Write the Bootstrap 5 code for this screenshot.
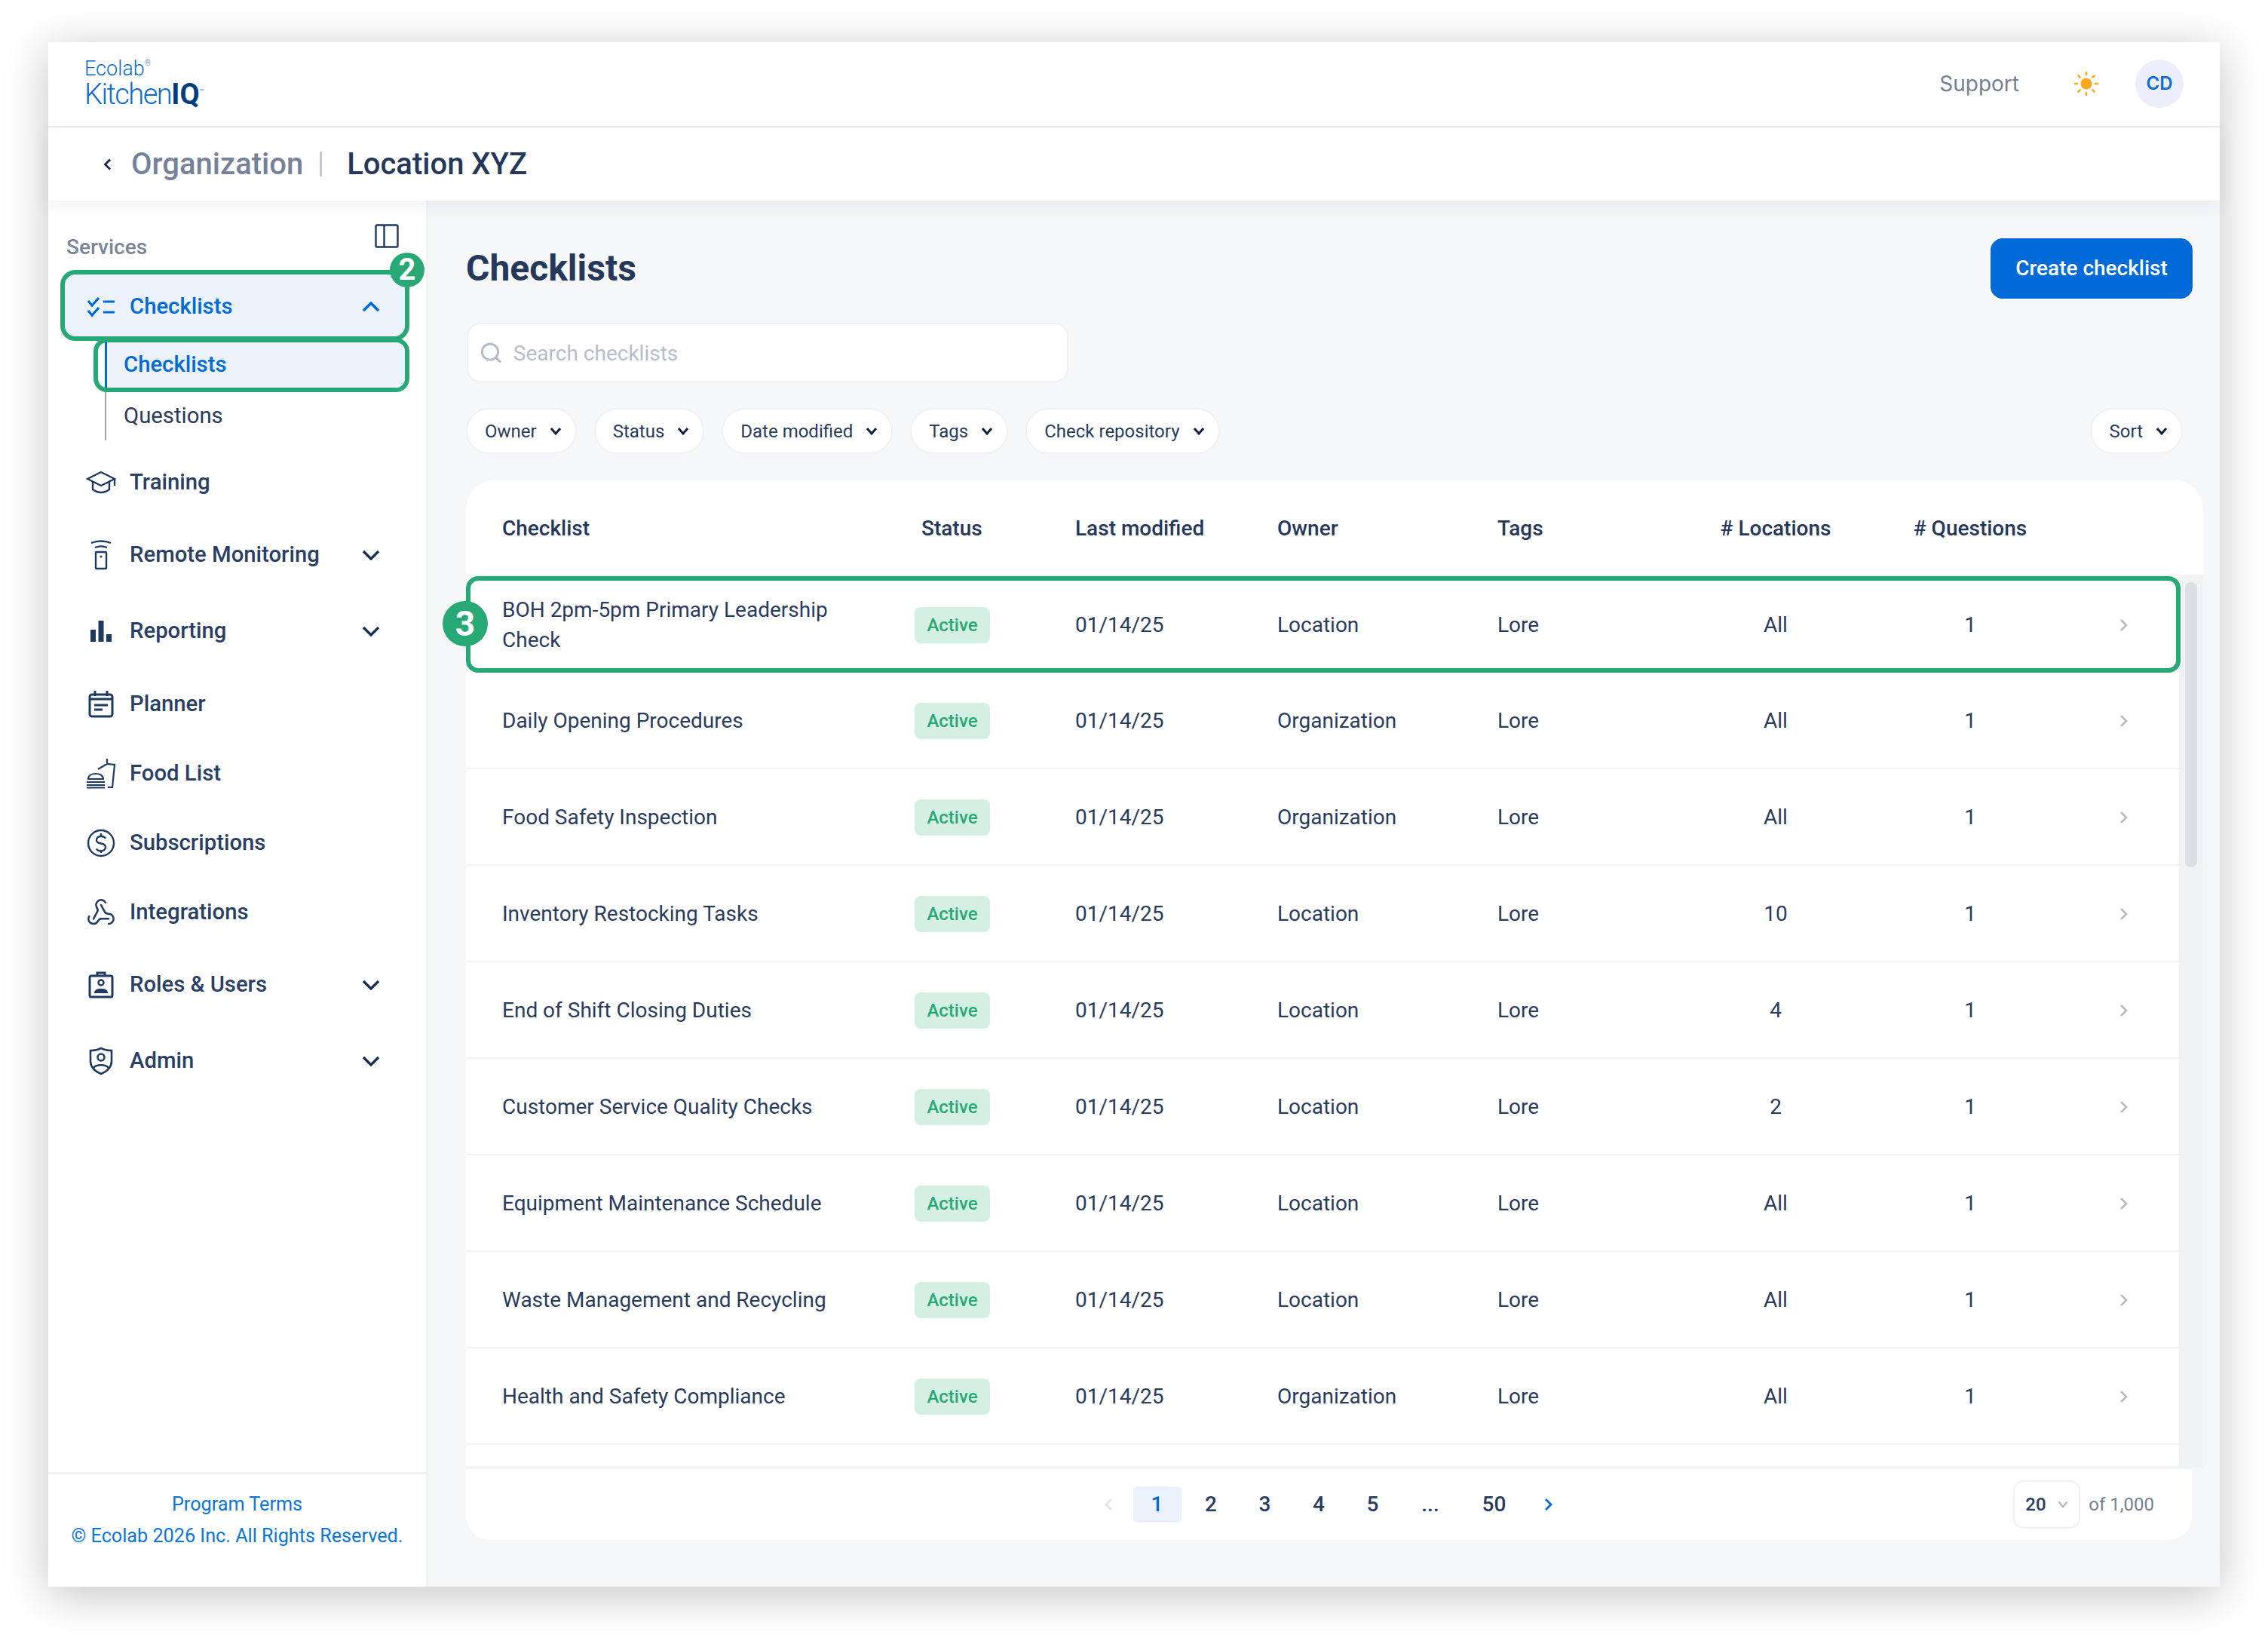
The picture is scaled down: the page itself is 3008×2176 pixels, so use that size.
<!DOCTYPE html>
<html lang="en">
<head>
<meta charset="UTF-8">
<title>Checklists</title>
<link href="https://cdn.jsdelivr.net/npm/bootstrap@5.3.0/dist/css/bootstrap.min.css" rel="stylesheet">
<style>
  body { background: #fff; font-family: Roboto, "Liberation Sans", sans-serif; color: #2a3b5c; overflow: hidden; height: 2176px; }
  .app-frame { width: 2880px; height: 2048px; margin: 56px auto 0; background: #fff; box-shadow: 0 10px 56px rgba(0,0,0,.24); display: flex; flex-direction: column; }

  /* top bars */
  .top-bar { height: 113px; border-bottom: 2px solid #e9eaef; padding: 0 48px 2px 48px; flex: none; }
  .logo-text { color: #0a6bd0; font-weight: 300; line-height: 1; margin-bottom: 4px; }
  .logo-a { font-size: 27px; height: 28px; }
  .logo-b { font-size: 38px; letter-spacing: -1.5px; height: 34px; white-space: nowrap; }
  .logo-b b { color: #003d7c; font-weight: 700; letter-spacing: 0; }
  .logo-text sup { font-size: 10px; top: -1.3em; letter-spacing: 0; }
  .support-link { font: 400 28px Inter, sans-serif; color: #75808f; }
  .sun-ico { margin: 0 49px 0 73px; }
  .avatar { width: 64px; height: 64px; border-radius: 50%; background: #eceffb; color: #0a6bd0; font: 600 24px Inter, sans-serif; }
  .crumb-bar { height: 97px; padding-left: 73px; font-size: 40px; font-weight: 500; box-shadow: 0 6px 24px rgba(30,40,70,.07); position: relative; z-index: 2; flex: none; }
  .crumb-back { margin-right: 26px; }
  .crumb-org { color: #76819a; }
  .crumb-sep { width: 3px; height: 33px; background: #c3c9d3; margin: 0 33px 0 22px; }
  .crumb-loc { color: #26385a; }

  /* sidebar */
  .app-body { flex: 1; min-height: 0; }
  .side-nav { width: 503px; border-right: 2px solid #f1f2f4; flex: none; }
  .side-head { padding: 31px 36px 0 24px; height: 82px; }
  .side-title { font-size: 28px; font-weight: 500; color: #7a8599; line-height: 40px; margin-top: 11px; }
  .side-item { height: 92px; padding: 3px 61px 0 50px; font-size: 29.3px; font-weight: 500; color: #2a3f63; text-decoration: none; }
  .side-item.tall { height: 101px; }
  .side-item svg.nav-ico { margin-right: 18px; flex: none; }
  .side-item .chev { margin-left: auto; }
  .side-active { height: 94px; margin: 10px 22px 0 16px; padding: 3px 33px 0 28px; border: 6px solid #27a874; border-radius: 20px; background: #ebf2fb; color: #006bd6; }
  .sub-wrap { margin: -4px 22px 0 60px; }
  .sub-active { height: 72px; border: 6px solid #27a874; border-radius: 18px; padding-left: 9px; background: #fff; }
  .sub-inner { height: 100%; flex: 1; border-left: 3px solid #006bd6; background: #ebf2fb; padding-left: 22px; font-size: 29.3px; font-weight: 500; color: #006bd6; border-radius: 0 12px 12px 0; }
  .sub-plain { height: 64px; margin-left: 15px; border-left: 2px solid #9aa5b5; padding-left: 23px; font-size: 29.3px; color: #2a3b5c; margin-bottom: 8px; }
  .step-dot { position: absolute; border-radius: 50%; background: #27a874; color: #fff; font-weight: 700; z-index: 5; }
  .step-two { width: 46px; height: 46px; top: -29px; right: -26px; font-size: 40px; }
  .step-three { width: 60px; height: 60px; top: 161px; left: -31px; font-size: 46px; }
  .side-foot { margin-top: auto; border-top: 3px solid #f1f2f4; height: 152px; padding-top: 19px; text-align: center; color: #0a75db; font-size: 25.2px; line-height: 42px; }

  /* main */
  .main-pane { flex: 1; min-width: 0; background: #f6f7f9; padding: 50px 22px 0 51px; }
  .page-title { font-size: 48px; font-weight: 700; color: #26385a; margin: 0; }
  .btn-create { width: 268px; height: 80px; margin-right: 14px; background: #006bd6; border: 0; border-radius: 16px; font-size: 28px; font-weight: 500; color: #fff; padding: 0; }
  .search-box { width: 798px; height: 79px; margin: 32px 0 0 1px; background: #fff; border: 2px solid #f0f1f4; border-radius: 18px; padding-left: 16px; }
  .search-box input { border: 0; box-shadow: none; padding: 2px 0 0 15px; font-size: 28px; background: transparent; }
  .search-box input::placeholder { color: #b7bdca; }
  .filter-row { margin: 34px 27px 0 0; }
  .filter-set { gap: 23px; }
  .filter-pill { height: 61px; padding: 0 18px 0 23px; background: #fff; border: 2px solid #f0f1f4; border-radius: 31px; font-size: 24px; color: #2a3b5c; gap: 17px; }
  .table-shell { margin-top: 34px; position: relative; }
  .tbl-grid { display: grid; grid-template-columns: 595px 213px 268px 292px 235px 268px 248px 154px; align-items: center; }
  .tbl-head { height: 126px; padding-top: 4px; background: #fff; border-radius: 40px 40px 0 0; font-size: 28px; font-weight: 500; color: #26385a; }
  .tbl-body { height: 1184px; overflow: hidden; border-top: 2px solid #f1f2f4; }
  .tbl-rows { width: 2272px; flex: none; border-radius: 0; }
  .tbl-rows .list-group-item { padding: 0; height: 128px; border: 0; border-bottom: 2px solid #f2f3f5; border-radius: 0; font-size: 28px; line-height: 40px; color: #2a3b5c; background: #fff; }
  .tbl-rows .list-group-item.row-mark { border: 6px solid #27a874; border-radius: 16px; width: 2274px; z-index: 3; }
  .tbl-rows .tbl-grid { height: 126px; padding-top: 2px; }
  .tbl-rows .row-mark .tbl-grid { margin: -6px 0 0 -6px; height: 128px; }
  .cell-first { padding-left: 48px; padding-right: 100px; }
  .cell-status-h { padding-left: 9px; }
  .cell-center { text-align: center; }
  .cell-go { padding-left: 74px; line-height: 0; }
  .state-tag { display: inline-block; width: 100px; height: 48px; line-height: 48px; text-align: center; background: #d4f0e4; color: #27a974; font-size: 24px; font-weight: 500; border-radius: 8px; }
  .scroll-track { width: 32px; flex: none; background: #f1f2f4; padding: 8px; }
  .scroll-thumb { height: 378px; background: #dcdfe4; border-radius: 8px; }
  .tbl-foot { height: 96px; margin-right: 15px; background: #fff; border-top: 2px solid #f2f3f5; border-radius: 0 0 32px 32px; padding: 0 50px 0 827px; }
  .pager { gap: 8.5px; margin: 0; }
  .pager .page-link { width: 64px; height: 48px; padding: 0; margin: 0; border: 0; background: transparent; color: #2a3b5c; font-size: 28px; font-weight: 500; display: flex; align-items: center; justify-content: center; border-radius: 6px !important; }
  .pager .page-item.active .page-link { background: #ebf2fb; color: #006bd6; }
  .pager .pg-arrow { width: 50px; }
  .pager .pg-dots { width: 74px; }
  .pager .pg-last { width: 80px; }
  .size-pick { width: 89px; height: 64px; border: 2px solid #f0f1f4; border-radius: 14px; font-size: 24px; font-weight: 500; padding: 0 14px; margin-right: 11px; }
  .foot-total { font-size: 24px; color: #75808f; }
</style>
</head>
<body>
<div class="app-frame">
  <header class="top-bar d-flex align-items-center justify-content-between">
    <div class="logo-text">
      <div class="logo-a">Ecolab<sup>®</sup></div>
      <div class="logo-b">Kitchen<b>IQ</b><sup>™</sup></div>
    </div>
    <div class="d-flex align-items-center">
      <span class="support-link">Support</span>
      <svg class="sun-ico" width="32" height="32" viewBox="0 0 32 32" fill="none" stroke="#fca81f" stroke-width="2.6" stroke-linecap="round"><circle cx="16" cy="16" r="7.5" fill="#fca81f" stroke="none"/><path d="M16 1v3M16 28v3M1 16h3M28 16h3M5.4 5.4l2.1 2.1M24.5 24.5l2.1 2.1M5.4 26.6l2.1-2.1M24.5 7.5l2.1-2.1"/></svg>
      <div class="avatar d-flex align-items-center justify-content-center">CD</div>
    </div>
  </header>
  <div class="crumb-bar d-flex align-items-center">
    <svg class="crumb-back" width="11" height="16" viewBox="0 0 11 16" fill="none" stroke="#1a2b4a" stroke-width="2.8"><path d="M9 1.5 2.5 8 9 14.5"/></svg>
    <span class="crumb-org">Organization</span>
    <span class="crumb-sep"></span>
    <span class="crumb-loc">Location XYZ</span>
  </div>

  <div class="app-body d-flex">
    <aside class="side-nav d-flex flex-column">
      <div class="side-head d-flex justify-content-between align-items-start">
        <span class="side-title">Services</span>
        <svg width="32" height="32" viewBox="0 0 32 32" fill="none" stroke="#1f3a60" stroke-width="2.4"><rect x="1.5" y="1.5" width="29" height="29" rx="1.5"/><path d="M12.5 1.5v29"/></svg>
      </div>

      <div class="side-item side-active position-relative d-flex align-items-center">
        <svg class="nav-ico" width="40" height="40" viewBox="0 0 40 40" fill="none" stroke="#006bd6" stroke-width="3.2"><path d="M3 12l5 6 9-10M3 25l5 6 9-10M23 13h15M23 27h15"/></svg>
        Checklists
        <svg class="chev" width="24" height="14" viewBox="0 0 24 14" fill="none" stroke="#006bd6" stroke-width="3.6"><path d="M2 12 12 2l10 10"/></svg>
        <span class="step-dot step-two d-flex align-items-center justify-content-center">2</span>
      </div>
      <div class="sub-wrap">
        <div class="sub-active d-flex"><div class="sub-inner d-flex align-items-center">Checklists</div></div>
        <div class="sub-plain d-flex align-items-center">Questions</div>
      </div>

      <a class="side-item d-flex align-items-center">
        <svg class="nav-ico" width="40" height="40" viewBox="0 0 40 40" fill="none" stroke="#1f3a60" stroke-width="2.4"><path d="M2 15 20 6l18 9-18 9zM9 19v10c4 3 7 4 11 4s7-1 11-4V19M38 15v9"/></svg>
        Training
      </a>
      <a class="side-item tall d-flex align-items-center">
        <svg class="nav-ico" width="40" height="40" viewBox="0 0 40 40" fill="none" stroke="#1f3a60" stroke-width="2.4"><path d="M7 4c8-3 18-3 26 0M12 10c5-2 11-2 16 0"/><rect x="13" y="16" width="14" height="22" rx="1"/><circle cx="20" cy="22" r="1.6" fill="#1f3a60" stroke="none"/></svg>
        Remote Monitoring
        <svg class="chev" width="24" height="14" viewBox="0 0 24 14" fill="none" stroke="#1a2f52" stroke-width="3.4"><path d="M2 2l10 10L22 2"/></svg>
      </a>
      <a class="side-item tall d-flex align-items-center">
        <svg class="nav-ico" width="40" height="40" viewBox="0 0 40 40" fill="#1f3a60"><rect x="6" y="18" width="7" height="16"/><rect x="16.5" y="6" width="7" height="28"/><rect x="27" y="24" width="7" height="10"/></svg>
        Reporting
        <svg class="chev" width="24" height="14" viewBox="0 0 24 14" fill="none" stroke="#1a2f52" stroke-width="3.4"><path d="M2 2l10 10L22 2"/></svg>
      </a>
      <a class="side-item d-flex align-items-center">
        <svg class="nav-ico" width="40" height="40" viewBox="0 0 40 40" fill="none" stroke="#1f3a60" stroke-width="3"><rect x="5" y="7" width="30" height="29" rx="3"/><path d="M12 2v7M28 2v7M5 13h30M11 21h18M11 27h11"/></svg>
        Planner
      </a>
      <a class="side-item d-flex align-items-center">
        <svg class="nav-ico" width="40" height="40" viewBox="0 0 40 40" fill="none" stroke="#1f3a60" stroke-width="2.2"><path d="M3 27c0-5 5-7 10-7s10 2 10 7zM1 31h24M1 35h24M1 38.5h24M16 14l12-7 10 1-3 30h-6M28 0v8"/></svg>
        Food List
      </a>
      <a class="side-item d-flex align-items-center">
        <svg class="nav-ico" width="40" height="40" viewBox="0 0 40 40" fill="none" stroke="#1f3a60" stroke-width="2.4"><circle cx="20" cy="20" r="17"/><path d="M26 14c-1-2-3-3-6-3-4 0-6 2-6 5s3 4 6 4.5 6 2 6 5-3 5-6 5c-3 0-5-1-6-3M20 7v4M20 29v4"/></svg>
        Subscriptions
      </a>
      <a class="side-item d-flex align-items-center">
        <svg class="nav-ico" width="40" height="40" viewBox="0 0 24 24" fill="none" stroke="#1f3a60" stroke-width="1.5" stroke-linecap="round"><path d="M18 16.98h-5.99c-1.1 0-1.95.94-2.48 1.9A4 4 0 0 1 2 17c.01-.7.2-1.4.57-2"/><path d="m6 17 3.13-5.78c.53-.97.1-2.18-.5-3.1a4 4 0 1 1 6.89-4.06"/><path d="m12 6 3.13 5.73C15.66 12.7 16.9 13 18 13a4 4 0 0 1 0 8"/></svg>
        Integrations
      </a>
      <a class="side-item tall d-flex align-items-center">
        <svg class="nav-ico" width="40" height="40" viewBox="0 0 40 40" fill="none" stroke="#1f3a60" stroke-width="3"><rect x="5" y="8" width="30" height="28" rx="2"/><path d="M15 8V4h10v4"/><circle cx="20" cy="17" r="3.5" stroke-width="2.5"/><path d="M11 31c0-5 4-6 9-6s9 1 9 6z" fill="#1f3a60" stroke="none"/></svg>
        Roles &amp; Users
        <svg class="chev" width="24" height="14" viewBox="0 0 24 14" fill="none" stroke="#1a2f52" stroke-width="3.4"><path d="M2 2l10 10L22 2"/></svg>
      </a>
      <a class="side-item tall d-flex align-items-center">
        <svg class="nav-ico" width="40" height="40" viewBox="0 0 40 40" fill="none" stroke="#1f3a60" stroke-width="2.6"><path d="M20 3c4 2 9 3 14 3v14c0 9-7 14-14 17C13 34 6 29 6 20V6c5 0 10-1 14-3z"/><circle cx="20" cy="15" r="4.5"/><path d="M10 29c4-5 16-5 20 0"/></svg>
        Admin
        <svg class="chev" width="24" height="14" viewBox="0 0 24 14" fill="none" stroke="#1a2f52" stroke-width="3.4"><path d="M2 2l10 10L22 2"/></svg>
      </a>

      <div class="side-foot">
        <div>Program Terms</div>
        <div>© Ecolab 2026 Inc. All Rights Reserved.</div>
      </div>
    </aside>

    <main class="main-pane">
      <div class="d-flex align-items-center justify-content-between">
        <h1 class="page-title">Checklists</h1>
        <button class="btn btn-primary btn-create">Create checklist</button>
      </div>
      <div class="search-box d-flex align-items-center">
        <svg width="30" height="30" viewBox="0 0 30 30" fill="none" stroke="#b4bac7" stroke-width="3"><circle cx="13.5" cy="13.5" r="11"/><path d="M21.5 21.5 28 28"/></svg>
        <input class="form-control" type="text" placeholder="Search checklists">
      </div>
      <div class="filter-row d-flex align-items-center">
        <div class="filter-set d-flex">
          <div class="filter-pill d-flex align-items-center">Owner <svg width="16" height="11" viewBox="0 0 16 11" fill="none" stroke="#14233f" stroke-width="3"><path d="M2 2l6 7 6-7"/></svg></div>
          <div class="filter-pill d-flex align-items-center">Status <svg width="16" height="11" viewBox="0 0 16 11" fill="none" stroke="#14233f" stroke-width="3"><path d="M2 2l6 7 6-7"/></svg></div>
          <div class="filter-pill d-flex align-items-center">Date modified <svg width="16" height="11" viewBox="0 0 16 11" fill="none" stroke="#14233f" stroke-width="3"><path d="M2 2l6 7 6-7"/></svg></div>
          <div class="filter-pill d-flex align-items-center">Tags <svg width="16" height="11" viewBox="0 0 16 11" fill="none" stroke="#14233f" stroke-width="3"><path d="M2 2l6 7 6-7"/></svg></div>
          <div class="filter-pill d-flex align-items-center">Check repository <svg width="16" height="11" viewBox="0 0 16 11" fill="none" stroke="#14233f" stroke-width="3"><path d="M2 2l6 7 6-7"/></svg></div>
        </div>
        <div class="filter-pill d-flex align-items-center ms-auto">Sort <svg width="16" height="11" viewBox="0 0 16 11" fill="none" stroke="#14233f" stroke-width="3"><path d="M2 2l6 7 6-7"/></svg></div>
      </div>

      <div class="table-shell">
        <span class="step-dot step-three d-flex align-items-center justify-content-center">3</span>
        <div class="tbl-head tbl-grid">
          <div class="cell-first">Checklist</div>
          <div class="cell-status-h">Status</div>
          <div>Last modified</div>
          <div>Owner</div>
          <div>Tags</div>
          <div class="cell-center"># Locations</div>
          <div class="cell-center"># Questions</div>
          <div></div>
        </div>
        <div class="tbl-body d-flex">
          <div class="tbl-rows list-group">
            <div class="list-group-item row-mark">
              <div class="tbl-grid">
                <div class="cell-first">BOH 2pm-5pm Primary Leadership Check</div><div><span class="state-tag">Active</span></div><div>01/14/25</div><div>Location</div><div>Lore</div><div class="cell-center">All</div><div class="cell-center">1</div>
                <div class="cell-go"><svg width="12" height="18" viewBox="0 0 12 18" fill="none" stroke="#b4bac7" stroke-width="2.6"><path d="M2 2l7 7-7 7"/></svg></div>
              </div>
            </div>
            <div class="list-group-item"><div class="tbl-grid">
              <div class="cell-first">Daily Opening Procedures</div><div><span class="state-tag">Active</span></div><div>01/14/25</div><div>Organization</div><div>Lore</div><div class="cell-center">All</div><div class="cell-center">1</div>
              <div class="cell-go"><svg width="12" height="18" viewBox="0 0 12 18" fill="none" stroke="#b4bac7" stroke-width="2.6"><path d="M2 2l7 7-7 7"/></svg></div>
            </div></div>
            <div class="list-group-item"><div class="tbl-grid">
              <div class="cell-first">Food Safety Inspection</div><div><span class="state-tag">Active</span></div><div>01/14/25</div><div>Organization</div><div>Lore</div><div class="cell-center">All</div><div class="cell-center">1</div>
              <div class="cell-go"><svg width="12" height="18" viewBox="0 0 12 18" fill="none" stroke="#b4bac7" stroke-width="2.6"><path d="M2 2l7 7-7 7"/></svg></div>
            </div></div>
            <div class="list-group-item"><div class="tbl-grid">
              <div class="cell-first">Inventory Restocking Tasks</div><div><span class="state-tag">Active</span></div><div>01/14/25</div><div>Location</div><div>Lore</div><div class="cell-center">10</div><div class="cell-center">1</div>
              <div class="cell-go"><svg width="12" height="18" viewBox="0 0 12 18" fill="none" stroke="#b4bac7" stroke-width="2.6"><path d="M2 2l7 7-7 7"/></svg></div>
            </div></div>
            <div class="list-group-item"><div class="tbl-grid">
              <div class="cell-first">End of Shift Closing Duties</div><div><span class="state-tag">Active</span></div><div>01/14/25</div><div>Location</div><div>Lore</div><div class="cell-center">4</div><div class="cell-center">1</div>
              <div class="cell-go"><svg width="12" height="18" viewBox="0 0 12 18" fill="none" stroke="#b4bac7" stroke-width="2.6"><path d="M2 2l7 7-7 7"/></svg></div>
            </div></div>
            <div class="list-group-item"><div class="tbl-grid">
              <div class="cell-first">Customer Service Quality Checks</div><div><span class="state-tag">Active</span></div><div>01/14/25</div><div>Location</div><div>Lore</div><div class="cell-center">2</div><div class="cell-center">1</div>
              <div class="cell-go"><svg width="12" height="18" viewBox="0 0 12 18" fill="none" stroke="#b4bac7" stroke-width="2.6"><path d="M2 2l7 7-7 7"/></svg></div>
            </div></div>
            <div class="list-group-item"><div class="tbl-grid">
              <div class="cell-first">Equipment Maintenance Schedule</div><div><span class="state-tag">Active</span></div><div>01/14/25</div><div>Location</div><div>Lore</div><div class="cell-center">All</div><div class="cell-center">1</div>
              <div class="cell-go"><svg width="12" height="18" viewBox="0 0 12 18" fill="none" stroke="#b4bac7" stroke-width="2.6"><path d="M2 2l7 7-7 7"/></svg></div>
            </div></div>
            <div class="list-group-item"><div class="tbl-grid">
              <div class="cell-first">Waste Management and Recycling</div><div><span class="state-tag">Active</span></div><div>01/14/25</div><div>Location</div><div>Lore</div><div class="cell-center">All</div><div class="cell-center">1</div>
              <div class="cell-go"><svg width="12" height="18" viewBox="0 0 12 18" fill="none" stroke="#b4bac7" stroke-width="2.6"><path d="M2 2l7 7-7 7"/></svg></div>
            </div></div>
            <div class="list-group-item"><div class="tbl-grid">
              <div class="cell-first">Health and Safety Compliance</div><div><span class="state-tag">Active</span></div><div>01/14/25</div><div>Organization</div><div>Lore</div><div class="cell-center">All</div><div class="cell-center">1</div>
              <div class="cell-go"><svg width="12" height="18" viewBox="0 0 12 18" fill="none" stroke="#b4bac7" stroke-width="2.6"><path d="M2 2l7 7-7 7"/></svg></div>
            </div></div>
            <div class="list-group-item"></div>
          </div>
          <div class="scroll-track flex-grow-1"><div class="scroll-thumb"></div></div>
        </div>
        <div class="tbl-foot d-flex align-items-center">
          <ul class="pagination pager">
            <li class="page-item"><a class="page-link pg-arrow"><svg width="12" height="18" viewBox="0 0 12 18" fill="none" stroke="#dfe2e7" stroke-width="2.6"><path d="M10 2 3 9l7 7"/></svg></a></li>
            <li class="page-item active"><a class="page-link">1</a></li>
            <li class="page-item"><a class="page-link">2</a></li>
            <li class="page-item"><a class="page-link">3</a></li>
            <li class="page-item"><a class="page-link">4</a></li>
            <li class="page-item"><a class="page-link">5</a></li>
            <li class="page-item"><a class="page-link pg-dots">...</a></li>
            <li class="page-item"><a class="page-link pg-last">50</a></li>
            <li class="page-item"><a class="page-link pg-arrow"><svg width="12" height="18" viewBox="0 0 12 18" fill="none" stroke="#006bd6" stroke-width="2.8"><path d="M2 2l7 7-7 7"/></svg></a></li>
          </ul>
          <div class="d-flex align-items-center ms-auto">
            <div class="size-pick d-flex align-items-center justify-content-between">20 <svg width="14" height="10" viewBox="0 0 14 10" fill="none" stroke="#aeb5c2" stroke-width="2.2"><path d="M1.5 1.5 7 8l5.5-6.5"/></svg></div>
            <span class="foot-total">of 1,000</span>
          </div>
        </div>
      </div>
    </main>
  </div>
</div>
</body>
</html>
